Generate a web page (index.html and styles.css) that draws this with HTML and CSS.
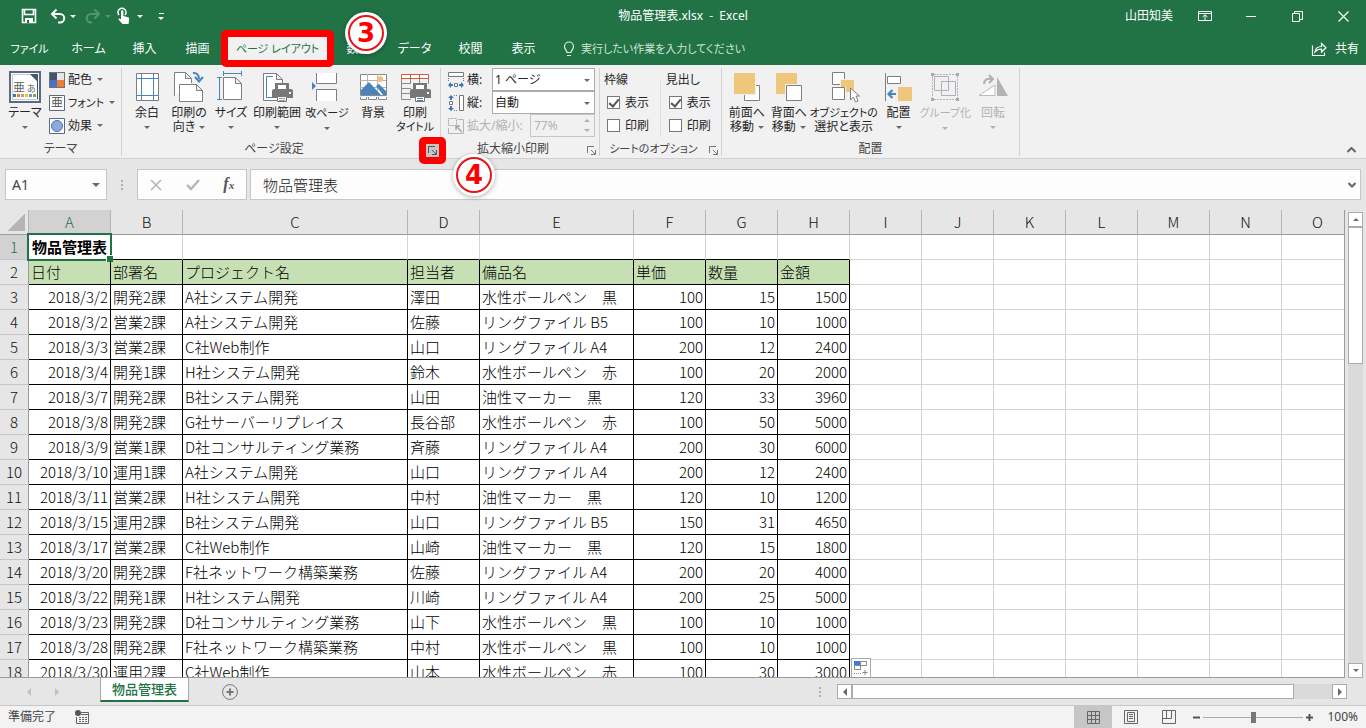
FILE: index.html
```html
<!DOCTYPE html>
<html lang="ja">

<head>
  <meta charset="UTF-8" />
  <meta name="viewport" content="width=device-width, initial-scale=1.0" />
  <title>物品管理表.xlsx - Excel</title>
  <link rel="stylesheet" href="styles.css">
</head>

<body>
  <!-- タイトルバー -->
  <header class="title-bar">
    <div class="quick">
      <button class="q-save" aria-label="上書き保存"><svg width="16" height="16" viewBox="0 0 16 16"><path d="M1.500 1.500h13v13h-13z M3.500 1.500v5h9v-5" fill="none" stroke="#fff" stroke-width="1.600"/><path d="M4 10h8v5H4z" fill="#fff"/><path d="M6 12h2v3H6z" fill="#217346"/></svg></button>
      <button class="q-undo" aria-label="元に戻す"><svg width="16" height="16" viewBox="0 0 16 16"><path d="M2 6h8a4 4 0 0 1 0 8.500h-2M6.500 1.500L2 6l4.500 4.500" fill="none" stroke="#fff" stroke-width="2"/></svg><i class="arrow"></i></button>
      <button class="q-redo" aria-label="やり直し"><svg width="16" height="16" viewBox="0 0 16 16"><path d="M14 6H6a4 4 0 0 0 0 8.500h1M9.500 1.500L14 6l-4.500 4.500" fill="none" stroke="#569474" stroke-width="2"/></svg><i class="arrow"></i></button>
      <button class="q-touch" aria-label="タッチ/マウス モードの切り替え"><svg width="14" height="18" viewBox="0 0 14 18"><path d="M2 8a4 4 0 1 1 6 0" fill="none" stroke="#fff" stroke-width="1.600"/><path d="M4 4.500a1.200 1.200 0 0 1 2.400 0V9l4.600 1.300c1 .3 1.300 1 1.200 2L11.500 17H5.500L1.500 12.500c0-1 1-1.400 2.500-.3z" fill="#fff"/></svg><i class="arrow"></i></button>
      <button class="q-more" aria-label="クイック アクセス ツール バーのユーザー設定"><i class="arrow"></i></button>
    </div>
    <h1>物品管理表.xlsx&nbsp; -&nbsp; Excel</h1>
    <div class="window-tools">
      <span class="user">山田知美</span>
      <button aria-label="リボンの表示オプション"><svg width="14" height="12" viewBox="0 0 14 12"><path d="M.5 1.500h13v9H.5zM.5 3.500h13M7 10V5M4.500 7L7 4.800 9.500 7" fill="none" stroke="#fff"/></svg></button>
      <button aria-label="最小化"><svg width="11" height="11" viewBox="0 0 11 11"><path d="M0 5.500h10" stroke="#fff"/></svg></button>
      <button aria-label="元に戻す (縮小)"><svg width="11" height="11" viewBox="0 0 11 11"><path d="M.5 2.500h7v8h-7zM2.500 2.500v-2h8v8h-3" fill="none" stroke="#fff"/></svg></button>
      <button aria-label="閉じる"><svg width="11" height="11" viewBox="0 0 11 11"><path d="M.5.5l10 10M10.500.5l-10 10" stroke="#fff" stroke-width="1.200"/></svg></button>
    </div>
  </header>

  <!-- リボンのタブ -->
  <nav class="ribbon-tabs">
    <button class="tab wide kana">ファイル</button>
    <button class="tab wide">ホーム</button>
    <button class="tab">挿入</button>
    <button class="tab">描画</button>
    <div class="tab-box">
      <button class="tab active kana">ページ レイアウト</button>
      <span class="mark mark-tab"></span>
      <span class="step step-3">3</span>
    </div>
    <button class="tab">数式</button>
    <button class="tab wide">データ</button>
    <button class="tab">校閲</button>
    <button class="tab">表示</button>
    <button class="tell-me kana"><svg width="12" height="16" viewBox="0 0 12 16"><path d="M4 11.500c0-2-2.500-3-2.500-6a4.500 4.500 0 0 1 9 0c0 3-2.500 4-2.500 6zM4 14.500h4" fill="none" stroke="#e4efe9" stroke-width="1.200"/></svg>実行したい作業を入力してください</button>
    <button class="share"><svg width="16" height="14" viewBox="0 0 16 14"><path d="M1.500 3.500v10h12v-3M4 10c.5-4 3-5.500 6.500-5.500V1.500L15 5.800 10.500 10V7C8 7 6 7.500 4 10z" fill="none" stroke="#fff" stroke-width="1.200"/></svg>共有</button>
  </nav>

  <!-- リボン -->
  <section class="ribbon">
    <div class="group g-theme">
      <div class="group-body">
        <button class="big w42"><svg width="32" height="32" viewBox="0 0 32 32"><path d="M1 1h30v30H1z" fill="#f8f8f8" stroke="#5b6a80" stroke-width="2"/><path d="M3.500 3.500h18l7 7v18h-25z" fill="#fff" stroke="#c9ced6"/><path d="M28.500 10v18" stroke="#44546a"/><path d="M21 3h8v8z" fill="#44546a"/><text x="4" y="21" font-size="12" fill="#666">亜</text><text x="18" y="21" font-size="9" fill="#666">あ</text><path d="M4 23h3v3H4z" fill="#4472c4"/><path d="M8 23h3v3H8z" fill="#ed7d31"/><path d="M12 23h3v3h-3z" fill="#a5a5a5"/><path d="M16 23h3v3h-3z" fill="#ffc000"/><path d="M20 23h3v3h-3z" fill="#5b9bd5"/><path d="M24 23h3v3h-3z" fill="#70ad47"/></svg><span>テーマ<br><i class="arrow"></i></span></button>
        <div class="rows">
          <button class="small"><svg width="16" height="16" viewBox="0 0 16 16"><path d="M0 0h16v16H0z" fill="#6d7480"/><path d="M1 1h7v7H1z" fill="#44546a"/><path d="M8 1h7v7H8z" fill="#e7e6e6"/><path d="M1 8h7v7H1z" fill="#4472c4"/><path d="M8 8h7v7H8z" fill="#ed7d31"/></svg>配色<i class="arrow"></i></button>
          <button class="small kana"><svg width="16" height="16" viewBox="0 0 16 16"><path d="M.5.5h15v15H.5z" fill="#fff" stroke="#5b6a80"/><text x="2" y="12" font-size="12" fill="#555">亜</text></svg>フォント<i class="arrow"></i></button>
          <button class="small"><svg width="16" height="16" viewBox="0 0 16 16"><path d="M.5.5h15v15H.5z" fill="#fff" stroke="#5b6a80"/><circle cx="8" cy="8" r="5.500" fill="#8ea9db" stroke="#4472c4"/></svg>効果<i class="arrow"></i></button>
        </div>
      </div>
      <div class="group-name">テーマ</div>
    </div>

    <div class="group g-page">
      <div class="group-body">
        <button class="big w42"><svg width="32" height="32" viewBox="0 0 32 32"><path d="M5.500 2.500h22v27h-22z" fill="#fff" stroke="#7f7f7f"/><path d="M10.500 3v26M22.500 3v26M6 7.500h21M6 24.500h21" stroke="#4a84bf"/></svg><span>余白<br><i class="arrow"></i></span></button>
        <button class="big w42"><svg width="32" height="32" viewBox="0 0 32 32"><path d="M1.500 25V1.500h11l6 6V12M12.500 1.500v6h6" fill="#fff" stroke="#7f7f7f"/><path d="M6.500 13.500h17l6 6v11h-23zM23.500 13.500v6h6" fill="#fff" stroke="#7f7f7f"/><path d="M20 2c4-.5 6 2 6 6M22 6l4 4.500L30 6" fill="none" stroke="#4a84bf" stroke-width="2"/></svg><span>印刷の<br>向き<i class="arrow after"></i></span></button>
        <button class="big w42"><svg width="32" height="32" viewBox="0 0 32 32"><path d="M8.500 2.500h18M8.500 0v5M26.500 0v5M4.500 7v22M2 6.500h5M2 28.500h5" stroke="#4a84bf"/><path d="M8.500 6.500h12l6 6v16h-18zM20.500 6.500v6h6" fill="#fff" stroke="#7f7f7f"/></svg><span>サイズ<br><i class="arrow"></i></span></button>
        <button class="big w50"><svg width="32" height="32" viewBox="0 0 32 32"><path d="M2.500 2.500h13l6 6v21h-19zM15.500 2.500v6h6" fill="#fff" stroke="#7f7f7f"/><path d="M12 5.500H5.500v21H11" fill="none" stroke="#4a84bf"/><path d="M14 12h14v6h2a2 2 0 0 1 2 2v7H11v-7a2 2 0 0 1 2-2h1z" fill="#777"/><path d="M16.500 13.500h9v5h-9zM16.500 25.500h9v5h-9z" fill="#fff" stroke="#777"/><path d="M18 27.500h6M18 29.500h6" stroke="#999"/><path d="M28 21h2v2h-2z" fill="#fff"/></svg><span>印刷範囲<br><i class="arrow"></i></span></button>
        <button class="big w50 kana"><svg width="32" height="32" viewBox="0 0 32 32"><path d="M5.500 2v10.500h20V2M5.500 30V18.500h20V30" fill="#fff" stroke="#7f7f7f"/><path d="M1 11l4 4-4 4z" fill="#4a84bf"/></svg><span>改ページ<br><i class="arrow"></i></span></button>
        <button class="big w42"><svg width="32" height="32" viewBox="0 0 32 32"><path d="M3.500 3.500h26v21h-26z" fill="#fff" stroke="#8a8a8a"/><path d="M10.500 3v21M20.500 3v21M3 9.500h26M3 16.500h26" stroke="#b5b5b5"/><circle cx="23" cy="8" r="3" fill="#edc27a"/><path d="M4 24v-5l8-8 12 13zM19 15l3-2 7 7v4h-3z" fill="#4a84bf"/><path d="M3.500 26v2.500h6V26M11.500 26v2.500h8V26M21.500 26v2.500h8V26" fill="#fff" stroke="#8a8a8a"/></svg><span>背景</span></button>
        <button class="big w42"><svg width="32" height="32" viewBox="0 0 32 32"><path d="M2.500 7v21.500H12M2 12.500h10M2 17.500h10M2 22.500h10M11.500 7v6M20.500 7v6M29.500 7v6" fill="none" stroke="#8a8a8a"/><path d="M2.500 3.500h27v4h-27zM11.500 3v4M20.500 3v4" fill="#fff" stroke="#d65a3c"/><path d="M14 12h14v6h2a2 2 0 0 1 2 2v7H11v-7a2 2 0 0 1 2-2h1z" fill="#777"/><path d="M16.500 13.500h9v5h-9zM16.500 25.500h9v5h-9z" fill="#fff" stroke="#777"/><path d="M18 27.500h6M18 29.500h6" stroke="#4a84bf"/><path d="M28 21h2v2h-2z" fill="#fff"/></svg><span>印刷<br><small>タイトル</small></span></button>
      </div>
      <div class="group-name has-launch">ページ設定
        <div class="launch-box">
          <button class="launch hover" aria-label="ページ設定"><svg width="9" height="9" viewBox="0 0 9 9"><path d="M.5 7V.5H7M4 4l4 4M8.500 4v4.500H4" fill="none" stroke="#555"/></svg></button>
          <span class="mark mark-launch"></span>
          <span class="step step-4">4</span>
        </div>
      </div>
    </div>

    <div class="group g-scale">
      <div class="group-body">
        <div class="fields">
          <div class="field">
            <svg width="16" height="16" viewBox="0 0 16 16"><path d="M.5.5h15v4H.5z" fill="#fff" stroke="#777"/><path d="M.5 6v4M15.500 6v4" stroke="#777" stroke-dasharray="1 1"/><path d="M6.500 11.500h3v3h-3z" fill="#fff" stroke="#777"/><path d="M0 13l3-3v2h2v2H3v2zM16 13l-3-3v2h-2v2h2v2z" fill="#3b78b8"/></svg>
            <label for="fit-width">横:</label>
            <span class="select"><select id="fit-width"><option>1 ページ</option><option>自動</option></select></span>
          </div>
          <div class="field">
            <svg width="16" height="16" viewBox="0 0 16 16"><path d="M11.500.5h4v15h-4z" fill="#fff" stroke="#777"/><path d="M6 .5h4M6 15.500h4" stroke="#777" stroke-dasharray="1 1"/><path d="M1.500 6.500h3v3h-3z" fill="#fff" stroke="#777"/><path d="M3 0l3 3H4v2H2V3H0zM3 16l3-3H4v-2H2v2H0z" fill="#3b78b8"/></svg>
            <label for="fit-height">縦:</label>
            <span class="select"><select id="fit-height"><option>自動</option><option>1 ページ</option></select></span>
          </div>
          <div class="field off">
            <svg width="16" height="16" viewBox="0 0 16 16"><path d="M.5.5h8v7h-8z" fill="none" stroke="#a6a6a6" stroke-dasharray="2 1"/><path d="M10 1.500h5.500v14H.5V10" fill="none" stroke="#b5b5b5"/><path d="M8 8l6 6M8 12V8h4" fill="none" stroke="#a6a6a6" stroke-width="1.500"/></svg>
            <label for="zoom-rate">拡大/縮小:</label>
            <span class="spin"><input id="zoom-rate" type="text" value="77%" disabled><i class="arrow up"></i><i class="arrow"></i></span>
          </div>
        </div>
      </div>
      <div class="group-name has-launch">拡大縮小印刷<button class="launch" aria-label="拡大縮小印刷"><svg width="9" height="9" viewBox="0 0 9 9"><path d="M.5 7V.5H7M4 4l4 4M8.500 4v4.500H4" fill="none" stroke="#777"/></svg></button></div>
    </div>

    <div class="group g-sheet">
      <div class="group-body">
        <fieldset class="checks">
          <legend>枠線</legend>
          <label><input type="checkbox" checked>表示</label>
          <label><input type="checkbox">印刷</label>
        </fieldset>
        <fieldset class="checks">
          <legend>見出し</legend>
          <label><input type="checkbox" checked>表示</label>
          <label><input type="checkbox">印刷</label>
        </fieldset>
      </div>
      <div class="group-name has-launch kana">シートのオプション<button class="launch" aria-label="シートのオプション"><svg width="9" height="9" viewBox="0 0 9 9"><path d="M.5 7V.5H7M4 4l4 4M8.500 4v4.500H4" fill="none" stroke="#777"/></svg></button></div>
    </div>

    <div class="group g-arrange">
      <div class="group-body">
        <button class="big w42"><svg width="32" height="32" viewBox="0 0 32 32"><path d="M13.500 14.500h15v15h-15z" fill="#fff" stroke="#7f7f7f"/><path d="M2 1h23v23H2z" fill="#f1f1f1"/><path d="M3 2h21v21H3z" fill="#efc77c"/></svg><span>前面へ<br>移動<i class="arrow after"></i></span></button>
        <button class="big w42"><svg width="32" height="32" viewBox="0 0 32 32"><path d="M3 2h21v21H3z" fill="#efc77c"/><path d="M12 13h18v18H12z" fill="#f1f1f1"/><path d="M13.500 14.500h15v15h-15z" fill="#fff" stroke="#7f7f7f"/></svg><span>背面へ<br>移動<i class="arrow after"></i></span></button>
        <button class="big w68"><svg width="32" height="32" viewBox="0 0 32 32"><path d="M4.500 1.500h12v12h-12zM4.500 16.500h12v12h-12z" fill="#fff" stroke="#7f7f7f"/><path d="M12 8h15v14H17v-6h-5z" fill="#f1f1f1"/><path d="M13 9h13v12h-8v-5h-5z" fill="#efc77c"/><path d="M22.500 17v12l3-3 2 5 2.500-1-2-5h3.500z" fill="#fff" stroke="#7f7f7f"/></svg><span><small>オブジェクトの</small><br>選択と表示</span></button>
        <button class="big w42"><svg width="32" height="32" viewBox="0 0 32 32"><path d="M2.500 2v28" stroke="#7f7f7f"/><path d="M4.500 5.500h13v7h-13z" fill="#fff" stroke="#7f7f7f"/><path d="M15 16h14v14H15z" fill="#efc77c"/><path d="M13 23H6M9.500 19L5.500 23l4 4" fill="none" stroke="#4a84bf" stroke-width="2.200"/></svg><span>配置<br><i class="arrow"></i></span></button>
        <button class="big w52 kana" disabled><svg width="32" height="32" viewBox="0 0 32 32"><path d="M5 3.500h22M5 28.500h22M3.500 5v22M28.500 5v22" stroke="#b5b5b5" stroke-dasharray="2 1"/><path d="M5.500 5.500h14v14h-14zM12.500 10.500h14v14h-14z" fill="#f5f0f8" stroke="#b0b0b0" fill-opacity=".6"/><path d="M2 2h3v3H2zM27 2h3v3h-3zM2 27h3v3H2zM27 27h3v3h-3z" fill="#aaa"/></svg><span>グループ化<br><i class="arrow"></i></span></button>
        <button class="big w44" disabled><svg width="32" height="32" viewBox="0 0 32 32"><path d="M2 24.500h16V14z" fill="#fff" stroke="#bbb"/><path d="M20 6v19h11z" fill="#b3b3b3"/><path d="M7 13c0-4 3-6 8-5M12 4l4 4-4 4" fill="none" stroke="#b0b0b0" stroke-width="2"/></svg><span>回転<br><i class="arrow"></i></span></button>
      </div>
      <div class="group-name">配置</div>
    </div>
    <button class="collapse" aria-label="リボンを折りたたむ"><svg width="9" height="6" viewBox="0 0 9 6"><path d="M.5 5l4-4 4 4" fill="none" stroke="#666" stroke-width="2"/></svg></button>
  </section>

  <!-- 数式バー -->
  <div class="formula-bar">
    <div class="name-box"><input type="text" value="A1" aria-label="名前ボックス"><i class="arrow"></i></div>
    <span class="dots"></span>
    <div class="fx-box">
      <button aria-label="キャンセル"><svg width="12" height="12" viewBox="0 0 12 12"><path d="M1 1l10 10M11 1L1 11" stroke="#b5b5b5" stroke-width="1.600"/></svg></button>
      <button aria-label="入力"><svg width="14" height="12" viewBox="0 0 14 12"><path d="M1 6l4 4 8-9" fill="none" stroke="#b5b5b5" stroke-width="2.400"/></svg></button>
      <button class="fx" aria-label="関数の挿入">f<sub>x</sub></button>
    </div>
    <div class="formula"><input type="text" value="物品管理表" aria-label="数式バー"><svg width="8" height="6" viewBox="0 0 8 6"><path d="M.5 1L4 4.500 7.500 1" fill="none" stroke="#666" stroke-width="2"/></svg></div>
  </div>

  <!-- ワークシート -->
  <main class="sheet">
    <div class="grid">
      <table>
        <colgroup>
          <col class="c-head"><col class="c-a"><col class="c-n"><col class="c-c"><col class="c-n"><col class="c-e"><col class="c-n" span="10">
        </colgroup>
        <thead>
          <tr><th class="corner"></th><th class="on">A</th><th>B</th><th>C</th><th>D</th><th>E</th><th>F</th><th>G</th><th>H</th><th>I</th><th>J</th><th>K</th><th>L</th><th>M</th><th>N</th><th>O</th></tr>
        </thead>
        <tbody>
          <tr class="first"><th class="on">1</th><td class="selected">物品管理表</td><td></td><td></td><td></td><td></td><td></td><td></td><td></td><td></td><td></td><td></td><td></td><td></td><td></td><td></td></tr>
          <tr class="label"><th>2</th><td>日付</td><td>部署名</td><td>プロジェクト名</td><td>担当者</td><td>備品名</td><td>単価</td><td>数量</td><td>金額</td><td></td><td></td><td></td><td></td><td></td><td></td><td></td></tr>
          <tr><th>3</th><td>2018/3/2</td><td>開発2課</td><td>A社システム開発</td><td>澤田</td><td>水性ボールペン　黒</td><td>100</td><td>15</td><td>1500</td><td></td><td></td><td></td><td></td><td></td><td></td><td></td></tr>
          <tr><th>4</th><td>2018/3/2</td><td>営業2課</td><td>A社システム開発</td><td>佐藤</td><td>リングファイル B5</td><td>100</td><td>10</td><td>1000</td><td></td><td></td><td></td><td></td><td></td><td></td><td></td></tr>
          <tr><th>5</th><td>2018/3/3</td><td>営業2課</td><td>C社Web制作</td><td>山口</td><td>リングファイル A4</td><td>200</td><td>12</td><td>2400</td><td></td><td></td><td></td><td></td><td></td><td></td><td></td></tr>
          <tr><th>6</th><td>2018/3/4</td><td>開発1課</td><td>H社システム開発</td><td>鈴木</td><td>水性ボールペン　赤</td><td>100</td><td>20</td><td>2000</td><td></td><td></td><td></td><td></td><td></td><td></td><td></td></tr>
          <tr><th>7</th><td>2018/3/7</td><td>開発2課</td><td>B社システム開発</td><td>山田</td><td>油性マーカー　黒</td><td>120</td><td>33</td><td>3960</td><td></td><td></td><td></td><td></td><td></td><td></td><td></td></tr>
          <tr><th>8</th><td>2018/3/8</td><td>開発2課</td><td>G社サーバーリプレイス</td><td>長谷部</td><td>水性ボールペン　赤</td><td>100</td><td>50</td><td>5000</td><td></td><td></td><td></td><td></td><td></td><td></td><td></td></tr>
          <tr><th>9</th><td>2018/3/9</td><td>営業1課</td><td>D社コンサルティング業務</td><td>斉藤</td><td>リングファイル A4</td><td>200</td><td>30</td><td>6000</td><td></td><td></td><td></td><td></td><td></td><td></td><td></td></tr>
          <tr><th>10</th><td>2018/3/10</td><td>運用1課</td><td>A社システム開発</td><td>山口</td><td>リングファイル A4</td><td>200</td><td>12</td><td>2400</td><td></td><td></td><td></td><td></td><td></td><td></td><td></td></tr>
          <tr><th>11</th><td>2018/3/11</td><td>営業2課</td><td>H社システム開発</td><td>中村</td><td>油性マーカー　黒</td><td>120</td><td>10</td><td>1200</td><td></td><td></td><td></td><td></td><td></td><td></td><td></td></tr>
          <tr><th>12</th><td>2018/3/15</td><td>運用2課</td><td>B社システム開発</td><td>山口</td><td>リングファイル B5</td><td>150</td><td>31</td><td>4650</td><td></td><td></td><td></td><td></td><td></td><td></td><td></td></tr>
          <tr><th>13</th><td>2018/3/17</td><td>営業2課</td><td>C社Web制作</td><td>山崎</td><td>油性マーカー　黒</td><td>120</td><td>15</td><td>1800</td><td></td><td></td><td></td><td></td><td></td><td></td><td></td></tr>
          <tr><th>14</th><td>2018/3/20</td><td>開発2課</td><td>F社ネットワーク構築業務</td><td>佐藤</td><td>リングファイル A4</td><td>200</td><td>20</td><td>4000</td><td></td><td></td><td></td><td></td><td></td><td></td><td></td></tr>
          <tr><th>15</th><td>2018/3/22</td><td>開発1課</td><td>H社システム開発</td><td>川崎</td><td>リングファイル A4</td><td>200</td><td>25</td><td>5000</td><td></td><td></td><td></td><td></td><td></td><td></td><td></td></tr>
          <tr><th>16</th><td>2018/3/23</td><td>開発2課</td><td>D社コンサルティング業務</td><td>山下</td><td>水性ボールペン　黒</td><td>100</td><td>10</td><td>1000</td><td></td><td></td><td></td><td></td><td></td><td></td><td></td></tr>
          <tr><th>17</th><td>2018/3/28</td><td>開発2課</td><td>F社ネットワーク構築業務</td><td>中村</td><td>水性ボールペン　黒</td><td>100</td><td>10</td><td>1000</td><td></td><td></td><td></td><td></td><td></td><td></td><td></td></tr>
          <tr><th>18</th><td>2018/3/30</td><td>運用2課</td><td>C社Web制作</td><td>山本</td><td>水性ボールペン　赤</td><td>100</td><td>30</td><td>3000</td><td class="paste-cell"><button class="paste" aria-label="オートフィル オプション"><svg width="14" height="14" viewBox="0 0 14 14"><path d="M6.500.5h6v4h-6zM.5 4.500h6v4h-6z" fill="#fff" stroke="#888"/><path d="M0 0h6v4H0z" fill="#3b78f0"/><path d="M0 12.500h8" stroke="#888" stroke-dasharray="1 1"/><path d="M8.500 11.500h5M11 9v5" stroke="#888"/></svg></button></td><td></td><td></td><td></td><td></td><td></td><td></td></tr>
        </tbody>
      </table>
    </div>
    <div class="v-scroll">
      <button aria-label="上へスクロール"><i class="arrow up"></i></button>
      <div class="thumb"></div>
      <div class="track"></div>
      <button aria-label="下へスクロール"><i class="arrow"></i></button>
    </div>
  </main>

  <!-- シート見出し -->
  <div class="sheet-tabs">
    <button class="nav" aria-label="前のシート"><i class="arrow left"></i></button>
    <button class="nav" aria-label="次のシート"><i class="arrow right"></i></button>
    <button class="sheet-tab">物品管理表</button>
    <button class="add" aria-label="新しいシート"><svg width="16" height="16" viewBox="0 0 16 16"><circle cx="8" cy="8" r="7.400" fill="none" stroke="#777"/><path d="M8 4.500v7M4.500 8h7" stroke="#777" stroke-width="2"/></svg></button>
    <div class="h-scroll">
      <span class="dots"></span>
      <button aria-label="左へスクロール"><i class="arrow left"></i></button>
      <div class="thumb"></div>
      <div class="track"></div>
      <button aria-label="右へスクロール"><i class="arrow right"></i></button>
    </div>
  </div>

  <!-- ステータスバー -->
  <footer class="status">
    <span>準備完了</span>
    <button class="macro" aria-label="マクロの記録"><svg width="14" height="14" viewBox="0 0 14 14"><path d="M6 2.500h7.500v11h-12V7M6 4.500h7.500" fill="none" stroke="#666"/><circle cx="3" cy="3" r="3" fill="#555"/><path d="M4 7.500h2M7 7.500h2M10 7.500h2M4 9.500h2M7 9.500h2M10 9.500h2M4 11.500h2M7 11.500h2M10 11.500h2" stroke="#666"/></svg></button>
    <div class="views">
      <button class="view on" aria-label="標準"><svg width="13" height="13" viewBox="0 0 13 13"><path d="M.5.500h12v12H.5zM4.500.5v12M8.500.5v12M.5 4.500h12M.5 8.500h12" fill="none" stroke="#666"/></svg></button>
      <button class="view" aria-label="ページ レイアウト"><svg width="14" height="14" viewBox="0 0 14 14"><path d="M.5.5h13v13H.5zM3.500 2.500h7v9h-7zM5 4.500h4M5 6.500h4M5 8.500h4" fill="none" stroke="#666"/></svg></button>
      <button class="view" aria-label="改ページ プレビュー"><svg width="14" height="14" viewBox="0 0 14 14"><path d="M.5.5h13v13H.5zM4.500.5v8M9.500.5v8M.5 8.500h9" fill="none" stroke="#666"/></svg></button>
    </div>
    <button class="zoom-step" aria-label="縮小"><svg width="7" height="7" viewBox="0 0 7 7"><path d="M0 3.500h7" stroke="#555" stroke-width="2"/></svg></button>
    <input class="zoom" type="range" min="0" max="100" value="50" aria-label="ズーム">
    <button class="zoom-step" aria-label="拡大"><svg width="7" height="7" viewBox="0 0 7 7"><path d="M0 3.500h7M3.500 0v7" stroke="#555" stroke-width="2"/></svg></button>
    <span class="percent">100%</span>
  </footer>
</body>

</html>
```

FILE: styles.css
```css
* {
  box-sizing: border-box;
  margin: 0;
  padding: 0;
}

html,
body {
  height: 100%;
}

body {
  display: flex;
  flex-direction: column;
  overflow: hidden;
  font: 12px/14px "Noto Sans", "Noto Sans CJK JP", sans-serif;
  color: #262626;
  background: #e6e6e6;
}

button,
input,
select {
  border: 0;
  background: none;
  font: inherit;
  color: inherit;
}

svg {
  display: block;
  flex: none;
}

.arrow {
  display: inline-block;
  flex: none;
  border: 3px solid transparent;
  border-top-color: currentColor;
  border-bottom: 0;
  color: #6a6a6a;
  vertical-align: middle;
}

.arrow.up {
  border-top: 0;
  border-bottom: 3px solid currentColor;
}

.arrow.left {
  border: 4px solid transparent;
  border-right-color: currentColor;
  border-left: 0;
}

.arrow.right {
  border: 4px solid transparent;
  border-left-color: currentColor;
  border-right: 0;
}

.kana,
small {
  font-size: 11px;
}

/* タイトルバー */
.title-bar {
  display: flex;
  align-items: center;
  height: 32px;
  flex: none;
  background: #217346;
  color: #fff;
}

.quick {
  display: flex;
  flex: 1;
}

.quick button {
  display: flex;
  align-items: center;
  gap: 4px;
}

.quick .arrow {
  color: #fff;
}

.quick .q-save {
  width: 29px;
  margin-left: 21px;
}

.quick .q-undo {
  width: 35px;
}

.quick .q-redo {
  width: 32px;
}

.quick .q-touch {
  width: 41px;
  gap: 6px;
}

.quick .q-redo .arrow {
  color: #569474;
}

.q-more .arrow {
  margin-top: 3px;
}

.quick .q-more {
  flex-direction: column;
  justify-content: center;
  gap: 0;
}

.q-more::before {
  content: "";
  width: 5px;
  height: 1px;
  background: #fff;
}

.title-bar h1 {
  font-size: 12px;
  font-weight: normal;
}

.window-tools {
  display: flex;
  flex: 1;
  justify-content: flex-end;
  align-items: center;
}

.window-tools .user {
  margin-right: 9px;
}

.window-tools button {
  display: flex;
  justify-content: center;
  width: 46px;
}

/* リボンのタブ */
.ribbon-tabs {
  display: flex;
  height: 33px;
  flex: none;
  background: #217346;
  color: #fff;
  font-feature-settings: "palt";
}

.tab {
  height: 33px;
  width: 53px;
  white-space: nowrap;
}

.tab.wide {
  width: 59px;
}

.tab-box {
  position: relative;
  margin: 0 5px 0 4px;
}

.tab.active {
  width: 99px;
  background: #f1f1f1;
  color: #217346;
}

/* 操作手順の赤枠と番号 */
.mark {
  position: absolute;
  border: 7px solid #f00;
  border-radius: 5px;
  pointer-events: none;
}

.mark-tab {
  inset: -2px -7px;
  z-index: 2;
}

.step {
  position: absolute;
  z-index: 3;
  width: 36px;
  height: 36px;
  border: 2px solid #e8141c;
  border-radius: 50%;
  background: #fff;
  box-shadow: 0 0 0 3px #fff, 0 1px 5px 3px rgba(0, 0, 0, .3);
  color: #f00;
  font: bold 26px/32px "DejaVu Sans", sans-serif;
  text-align: center;
}

.step-3 {
  top: -17px;
  left: 120px;
}

.step-4 {
  top: 13px;
  left: 30px;
}

.tell-me,
.share {
  display: flex;
  align-items: center;
}

.tell-me {
  gap: 6px;
  margin-left: 13px;
  color: #d3e3da;
}

.share {
  gap: 8px;
  margin-left: auto;
  padding-right: 7px;
}

/* リボン */
.ribbon {
  display: flex;
  flex: none;
  background: #f1f1f1;
  border-bottom: 1px solid #d2d2d2;
  font-feature-settings: "palt";
}

.group {
  display: flex;
  flex-direction: column;
  margin: 3px 0 2px;
  padding: 0 4px;
  border-right: 1px solid #d2d2d2;
}

.group-body {
  display: flex;
  flex: 1;
}

.group-name {
  position: relative;
  height: 14px;
  margin-top: 5px;
  text-align: center;
  color: #444;
}

.has-launch {
  padding-right: 14px;
}

.g-theme {
  width: 122px;
}

.g-page {
  width: 319px;
}

.g-scale {
  width: 159px;
}

.g-sheet {
  width: 122px;
}

.big {
  display: flex;
  flex-direction: column;
  align-items: center;
  gap: 3px;
  padding-top: 3px;
  white-space: nowrap;
}

.big span {
  line-height: 14px;
}

.big .after {
  margin-left: 4px;
}

.big:disabled,
.big:disabled .arrow {
  color: #b1b1b1;
}

.w42 {
  width: 42px;
}

.w44 {
  width: 44px;
}

.w50 {
  width: 50px;
}

.w52 {
  width: 52px;
}

.w68 {
  width: 68px;
}

.rows {
  padding-left: 3px;
}

.small {
  display: flex;
  align-items: center;
  gap: 3px;
  height: 23px;
  white-space: nowrap;
}

.small .arrow {
  margin-left: 2px;
}

.launch {
  position: absolute;
  right: -3px;
  top: 2px;
  display: flex;
  align-items: center;
  justify-content: center;
  width: 13px;
  height: 13px;
}

.launch-box {
  position: absolute;
  right: -3px;
  top: 2px;
  width: 13px;
  height: 13px;
}

.launch.hover {
  inset: 0;
  background: #c5c5c5;
}

.mark-launch {
  inset: -7px;
}

.fields {
  flex: 1;
  padding-left: 3px;
}

.field {
  display: flex;
  align-items: center;
  height: 23px;
  gap: 3px;
}

.field.off {
  color: #b1b1b1;
}

.select,
.spin {
  position: relative;
  margin-left: auto;
  height: 23px;
  border: 1px solid #ababab;
  background: #fff;
}

.select {
  width: 103px;
}

.select select {
  width: 100%;
  height: 21px;
  padding-left: 2px;
  appearance: none;
}

.select::after {
  content: "";
  position: absolute;
  top: 10px;
  right: 4px;
  border: 3px solid transparent;
  border-top-color: #6a6a6a;
  border-bottom: 0;
  pointer-events: none;
}

.spin {
  display: grid;
  grid-template-columns: 1fr 14px;
  width: 65px;
  background: #f1f1f1;
  border-color: #c6c6c6;
}

.spin input {
  grid-row: span 2;
  width: 100%;
  padding-left: 3px;
}

.spin .arrow {
  align-self: center;
  justify-self: center;
  color: #b1b1b1;
}

.checks {
  width: 61px;
  border: 0;
}

.checks + .checks {
  margin-left: -1px;
  padding-left: 6px;
  background: linear-gradient(#dcdcdc, #dcdcdc) left center / 1px 55px no-repeat;
}

.checks legend {
  height: 23px;
  line-height: 23px;
}

.checks label {
  display: flex;
  align-items: center;
  gap: 5px;
  height: 23px;
  padding-left: 3px;
  white-space: nowrap;
}

.checks input {
  position: relative;
  width: 13px;
  height: 13px;
  border: 1px solid #777;
  background: #fff;
  appearance: none;
}

.checks input:checked::before {
  content: "";
  position: absolute;
  top: 0;
  left: 3px;
  width: 4px;
  height: 8px;
  border: solid #555;
  border-width: 0 2px 2px 0;
  transform: rotate(40deg);
}

.g-arrange {
  width: 298px;
}

.collapse {
  margin-left: auto;
  padding: 0 10px 5px 0;
  align-self: flex-end;
}

/* 数式バー */
.formula-bar {
  display: flex;
  flex: none;
  height: 51px;
  padding: 10px 5px;
}

.name-box,
.fx-box,
.formula {
  display: flex;
  align-items: center;
  border: 1px solid #c6c6c6;
  background: #fdfdfd;
}

.name-box {
  width: 102px;
  padding: 0 6px;
  font-size: 14px;
  color: #444;
}

.name-box input {
  flex: 1;
  min-width: 0;
}

.name-box .arrow {
  border-width: 4px;
  border-bottom-width: 0;
}

.dots {
  width: 2px;
  height: 10px;
  background: repeating-linear-gradient(#b0b0b0 0 2px, transparent 2px 4px);
}

.formula-bar .dots {
  align-self: center;
  margin: 0 14px;
}

.fx-box {
  justify-content: space-around;
  width: 110px;
}

.fx {
  font: italic bold 16px/20px "Liberation Serif", serif;
  color: #555;
}

.fx sub {
  font-size: 11px;
  vertical-align: baseline;
}

.formula {
  flex: 1;
  margin-left: 3px;
  padding: 0 4px 0 12px;
  font-size: 15px;
  font-weight: 300;
  color: #222;
}

.formula input {
  flex: 1;
}

/* ワークシート */
.sheet {
  display: flex;
  flex: 1;
  min-height: 0;
}

.grid {
  flex: 1;
  min-width: 0;
  overflow: hidden;
  border-right: 1px solid #9b9b9b;
  border-bottom: 1px solid #9b9b9b;
  background: linear-gradient(#e6e6e6 24px, #fff 24px);
}

.grid table {
  width: 100%;
  min-width: 1354px;
  table-layout: fixed;
  border-spacing: 0;
  font-family: "Noto Sans CJK JP", sans-serif;
  font-size: 15px;
  font-weight: 300;
  line-height: 24px;
  color: #000;
}

.c-head {
  width: 29px;
}

.c-a {
  width: 82px;
}

.c-n {
  width: 72px;
}

.c-c {
  width: 225px;
}

.c-e {
  width: 154px;
}

.grid th {
  height: 25px;
  font-weight: 300;
  color: #111;
  background: #e6e6e6;
}

thead th {
  border-right: 1px solid #b5b5b5;
  border-bottom: 1px solid #9b9b9b;
}

tbody th {
  border-right: 1px solid #9b9b9b;
  border-bottom: 1px solid #c6c6c6;
}

.grid th.on {
  background: #d2d2d2;
  color: #217346;
}

.grid .corner {
  background: linear-gradient(135deg, #e6e6e6 50%, #b5b5b5 50%) 8px 4px / 17px 17px no-repeat #e6e6e6;
}

.grid td {
  height: 25px;
  padding: 0 2px;
  border-right: 1px solid #d4d4d4;
  border-bottom: 1px solid #d4d4d4;
  white-space: nowrap;
}

tbody td:nth-child(-n+9) {
  border-right-color: #000;
  border-bottom-color: #000;
}

tbody td:nth-child(2),
tbody td:nth-child(n+7) {
  text-align: right;
}

.first td:nth-child(-n+9) {
  border-right-color: #d4d4d4;
}

.label td:nth-child(-n+9) {
  background: #c6e0b4;
  text-align: left;
}

.grid .selected {
  position: relative;
  padding-left: 3px;
  font-weight: bold;
  text-align: left;
}

.selected::before {
  content: "";
  position: absolute;
  inset: -2px;
  border: 2px solid #217346;
}

.selected::after {
  content: "";
  position: absolute;
  right: -3px;
  bottom: -3px;
  width: 6px;
  height: 6px;
  border: solid #fff;
  border-width: 1px 0 0 1px;
  background: #217346;
}

.paste-cell {
  position: relative;
}

.paste {
  position: absolute;
  top: -2px;
  left: 1px;
  padding: 2px;
  border: 1px solid #ababab;
  background: #fff;
}

.v-scroll {
  display: flex;
  flex-direction: column;
  width: 21px;
  padding: 2px 3px 0;
}

.v-scroll button,
.h-scroll button {
  display: flex;
  align-items: center;
  justify-content: center;
  flex: none;
  width: 15px;
  height: 15px;
  border: 1px solid #ababab;
  background: #fff;
}

.thumb {
  border: 1px solid #ababab;
  background: #fff;
}

.track {
  background: #dadada;
}

.v-scroll .thumb {
  flex: 31;
}

.v-scroll .track {
  flex: 69;
}

/* シート見出し */
.sheet-tabs {
  display: flex;
  flex: none;
  height: 27px;
  padding-left: 15px;
}

.nav {
  width: 28px;
}

.nav .arrow {
  color: #c0c0c0;
}

.sheet-tab {
  width: 89px;
  height: 24px;
  margin-left: 29px;
  border: 1px solid #ababab;
  border-width: 0 1px;
  border-bottom: 2px solid #217346;
  background: #fff;
  font-size: 13px;
  font-weight: 500;
  color: #217346;
}

.add {
  margin-left: 33px;
}

.h-scroll {
  display: flex;
  align-items: center;
  width: 528px;
  margin-left: auto;
  margin-right: 19px;
}

.h-scroll .dots {
  margin-right: 16px;
}

.h-scroll .thumb,
.h-scroll .track {
  height: 15px;
}

.h-scroll .thumb {
  flex: 92;
}

.h-scroll .track {
  flex: 8;
}

/* ステータスバー */
.status {
  display: flex;
  align-items: center;
  flex: none;
  height: 23px;
  padding: 0 8px;
  border-top: 1px solid #c6c6c6;
  background: #f3f3f3;
  color: #444;
}

.macro {
  margin-left: 19px;
}

.views {
  display: flex;
  align-self: stretch;
  margin-left: auto;
}

.view {
  display: flex;
  align-items: center;
  justify-content: center;
  width: 38px;
}

.view.on {
  background: #c6c6c6;
}

.zoom-step {
  width: 7px;
  margin-left: 5px;
}

.zoom {
  width: 100px;
  height: 12px;
  margin-left: 3px;
  appearance: none;
  background: linear-gradient(#ababab, #ababab) center / 100% 1px no-repeat;
}

.zoom + .zoom-step {
  margin-left: 3px;
}

.zoom::-webkit-slider-thumb {
  width: 5px;
  height: 11px;
  appearance: none;
  background: #777;
}

.percent {
  width: 45px;
  text-align: right;
}
```
